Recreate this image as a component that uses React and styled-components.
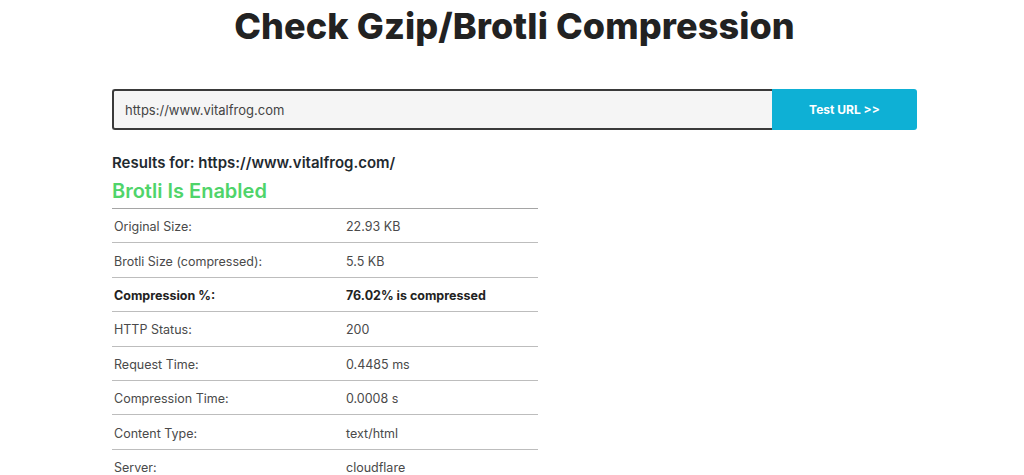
import React from 'react';
import styled, { createGlobalStyle } from 'styled-components';

const Global = createGlobalStyle`
  body {
    margin: 0;
    background: #fff;
    font-family: Inter, "Noto Sans", sans-serif;
    color: #222;
  }
`

const Page = styled.div`
  width: 805px;
  margin: 0 auto;
  padding-left: 5px;
`

const Title = styled.h1`
  margin: 0;
  padding-top: 4px;
  text-align: center;
  font-size: 36px;
  font-weight: 800;
  letter-spacing: 0.1px;
  line-height: 44px;
  color: #222;
`

const Form = styled.form`
  display: flex;
  margin-top: 41px;
  height: 41px;
`

const UrlInput = styled.input`
  flex: 1;
  box-sizing: border-box;
  height: 41px;
  border: 2px solid #3a3a3a;
  border-right: none;
  border-radius: 3px 0 0 3px;
  background: #f5f5f5;
  padding: 0 11px;
  font-family: inherit;
  font-size: 13px;
  color: #444;
  outline: none;
`

const Button = styled.button`
  width: 145px;
  border: none;
  border-radius: 0 3px 3px 0;
  background: #0eb0d5;
  color: #fff;
  font-family: inherit;
  font-size: 12px;
  font-weight: 700;
`

const ResultsFor = styled.h4`
  margin: 23px 0 0;
  font-size: 15px;
  font-weight: 600;
  line-height: 20px;
  color: #1f2a30;
`

const Status = styled.h3`
  margin: 5px 0 0;
  font-size: 20px;
  font-weight: 600;
  line-height: 26px;
  color: #4fd46a;
`

const Table = styled.table`
  width: 426px;
  margin-top: 4px;
  border-collapse: collapse;
  border-top: 1.5px solid #a5a5a5;
`

const Row = styled.tr`
  height: 34.4px;
  border-bottom: 1.5px solid #bdbdbd;
  font-weight: ${p => (p.$bold ? 700 : 400)};
  color: ${p => (p.$bold ? '#222' : '#4a4a4a')};
`

const Cell = styled.td`
  padding: 2px 2px 0;
  font-size: 12.5px;
  width: ${p => p.$w || 'auto'};
`

const rows = [
  ['Original Size:', '22.93 KB'],
  ['Brotli Size (compressed):', '5.5 KB'],
  ['Compression %:', '76.02% is compressed', true],
  ['HTTP Status:', '200'],
  ['Request Time:', '0.4485 ms'],
  ['Compression Time:', '0.0008 s'],
  ['Content Type:', 'text/html'],
  ['Server:', 'cloudflare'],
]

export default function App() {
  return (
    <Page>
      <Global />
      <Title>Check Gzip/Brotli Compression</Title>
      <Form onSubmit={e => e.preventDefault()}>
        <UrlInput defaultValue="https://www.vitalfrog.com" />
        <Button type="submit">Test URL &gt;&gt;</Button>
      </Form>
      <ResultsFor>Results for: https://www.vitalfrog.com/</ResultsFor>
      <Status>Brotli Is Enabled</Status>
      <Table>
        <tbody>
          {rows.map(([k, v, b]) => (
            <Row key={k} $bold={b}>
              <Cell $w="228px">{k}</Cell>
              <Cell>{v}</Cell>
            </Row>
          ))}
        </tbody>
      </Table>
    </Page>
  )
}
